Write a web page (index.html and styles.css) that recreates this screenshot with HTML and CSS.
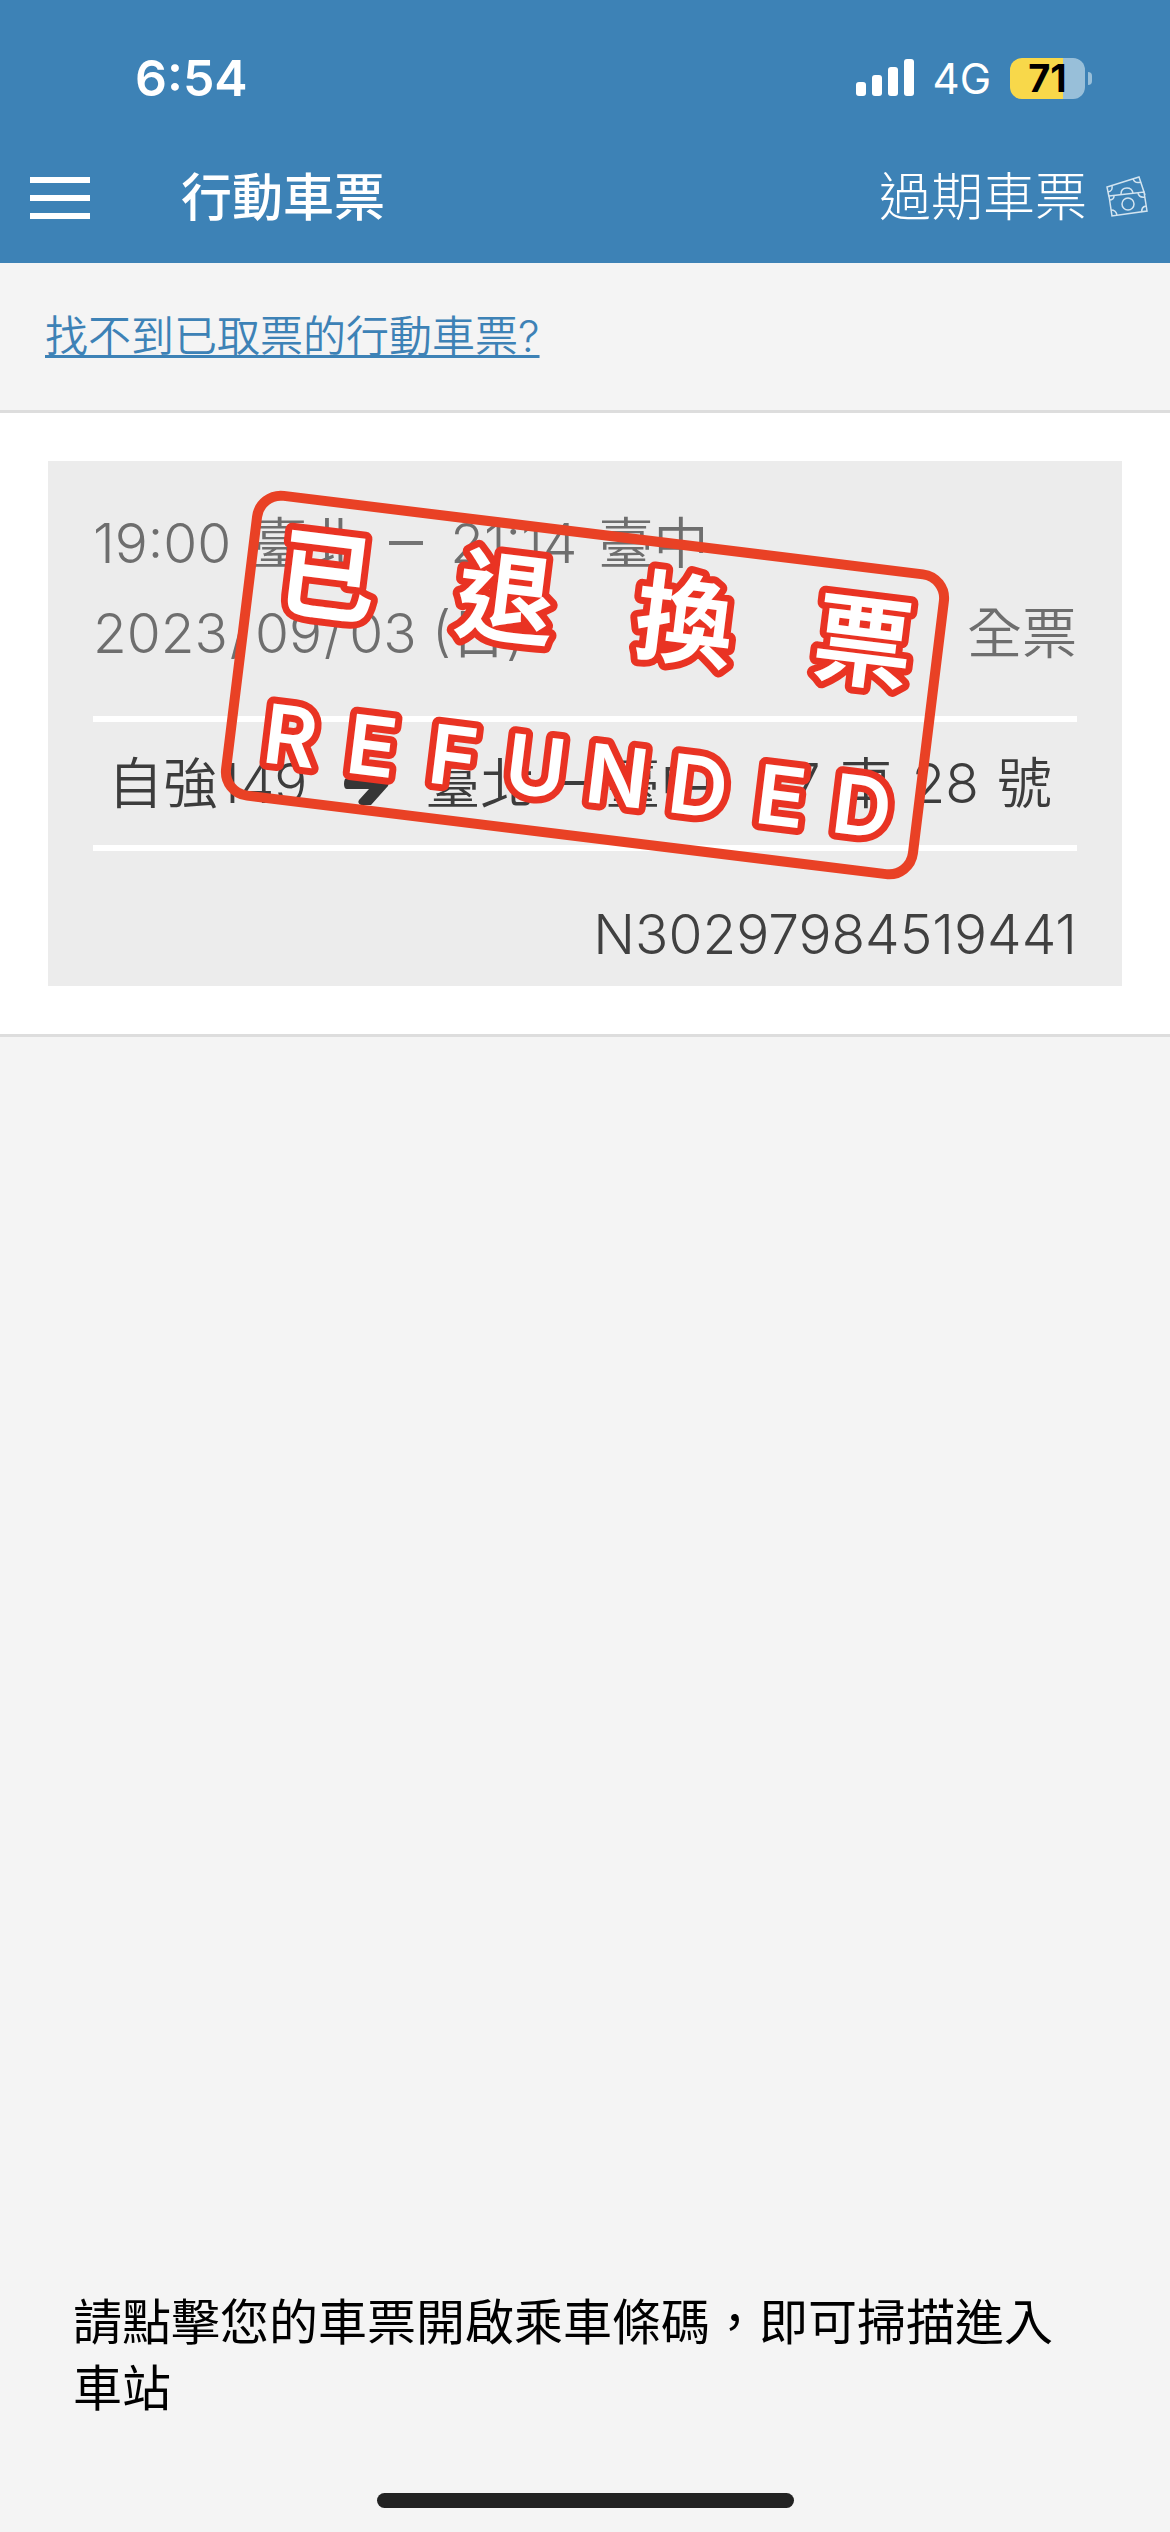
FILE: index.html
```html
<!DOCTYPE html>
<html lang="zh-Hant">
<head>
<meta charset="utf-8">
<meta name="viewport" content="width=device-width, initial-scale=1">
<title>行動車票</title>
<link rel="stylesheet" href="styles.css">
</head>
<body>
<header class="header">
  <div class="status">
    <span class="clock">6:54</span>
    <div class="indicators">
      <svg class="signal" viewBox="0 0 58 38" aria-hidden="true">
        <rect x="0" y="23" width="10" height="14" rx="3"/>
        <rect x="16" y="16" width="10" height="21" rx="3"/>
        <rect x="32" y="8" width="10" height="29" rx="3"/>
        <rect x="48" y="0" width="10" height="37" rx="3"/>
      </svg>
      <span class="network">4G</span>
      <div class="battery"><span class="battery-level">71</span></div>
    </div>
  </div>
  <nav class="navbar">
    <button class="menu" type="button" aria-label="選單"><span></span><span></span><span></span></button>
    <h1 class="title">行動車票</h1>
    <a class="expired" href="#">過期車票
      <svg class="tickets" viewBox="0 0 44 44" aria-hidden="true">
        <path d="M4 21 2 11 34 1 40 19M4 20 39 16 42 35 7 40Z"/>
        <path d="M3 16Q8 15 7 10M28 3Q30 8 36 6M4 24Q9 24 9 20M33 17Q34 22 40 21M6 34Q11 34 12 39M37 36Q36 31 41 30M16 18Q16 12 22 12Q27 12 28 17"/>
        <circle cx="23" cy="28" r="6"/>
      </svg>
    </a>
  </nav>
</header>
<main class="main">
  <p class="help"><a href="#">找不到已取票的行動車票?</a></p>
  <section class="tickets-list">
    <article class="ticket">
      <div class="route">
        <span>19:00</span><span>臺北</span><span class="dash"></span><span>21:14</span><span>臺中</span>
      </div>
      <div class="date">
        <span>2023<span class="slash">/</span>09<span class="slash">/</span>03 (日)</span><span>全票</span>
      </div>
      <div class="train">
        <span>自強149</span>
        <svg class="arrow" viewBox="0 0 46 46" aria-hidden="true"><path d="M4 18H26L16 8Q14 5 18 3H28L45 22Q46 24 45 26L28 45H18Q14 43 16 40L26 29H4Q1 29 1 24Q1 18 4 18Z"/></svg>
        <span class="train-route"><span>臺北</span><span class="dash short"></span><span>臺中</span></span>
        <span class="seat"><span>7</span><span>車</span><span>28</span><span>號</span></span>
      </div>
      <div class="number">N30297984519441</div>
      <svg class="stamp" viewBox="0 0 702 312" role="img" aria-label="已退換票 REFUNDED">
        <rect class="stamp-frame" x="5" y="5" width="692" height="302" rx="24"/>
        <g class="stamp-zh">
          <text x="82" y="116">已</text><text x="262" y="116">退</text><text x="442" y="116">換</text><text x="622" y="116">票</text>
        </g>
        <g class="stamp-en">
          <text x="65" y="272">R</text><text x="147" y="272">E</text><text x="229" y="272">F</text><text x="312" y="272">U</text><text x="394" y="272">N</text><text x="476" y="272">D</text><text x="559" y="272">E</text><text x="641" y="272">D</text>
        </g>
      </svg>
    </article>
  </section>
</main>
<footer class="footer">
  <p class="hint">請點擊您的車票開啟乘車條碼，即可掃描進入車站</p>
  <div class="home-bar"></div>
</footer>
</body>
</html>
```
FILE: styles.css
```css
* { box-sizing: border-box; }

body {
  margin: 0;
  min-height: 100vh;
  display: flex;
  flex-direction: column;
  background: #f4f4f4;
  color: #000;
  font-family: Inter, "Noto Sans CJK TC", sans-serif;
  font-weight: 350;
}

.header { background: #3d82b6; color: #fff; }

.status {
  display: flex;
  justify-content: space-between;
  align-items: center;
  height: 156px;
  padding: 0 85px 0 135px;
}
.clock { font-size: 50px; font-weight: 600; }
.indicators { display: flex; align-items: center; gap: 19px; }
.signal { width: 58px; height: 38px; fill: #fff; }
.network { font-size: 42px; font-weight: 400; }
.battery {
  position: relative;
  width: 75px;
  height: 41px;
  border-radius: 12px;
  background: linear-gradient(90deg, #f8d84a 53px, #98bfd9 53px);
  color: #000;
  text-align: center;
}
.battery::after {
  content: "";
  position: absolute;
  left: 78px;
  top: 14px;
  width: 4px;
  height: 13px;
  border-radius: 0 4px 4px 0;
  background: #98bfd9;
}
.battery-level { display: block; font-size: 38px; line-height: 41px; font-weight: 700; }

.navbar { display: flex; align-items: center; height: 107px; padding: 0 21px 24px 30px; }
.menu {
  display: flex;
  flex-direction: column;
  gap: 12px;
  width: 60px;
  padding: 0;
  border: 0;
  background: none;
}
.menu span { height: 6px; background: #fff; }
.title { margin: 0 0 0 91px; font-size: 51px; line-height: 60px; font-weight: 500; }
.expired {
  display: flex;
  align-items: center;
  gap: 18px;
  margin-left: auto;
  color: #fff;
  font-size: 52px;
  font-weight: 300;
  line-height: 60px;
  text-decoration: none;
}
.tickets { width: 44px; height: 44px; fill: none; stroke: #d3e4f0; stroke-width: 1.5; }

.main { flex: 1; }
.help { margin: 0; padding: 45px; font-size: 43px; line-height: 57px; }
.help a { color: #3d82b6; text-decoration-thickness: 3px; text-underline-offset: 3px; text-decoration-skip-ink: none; }

.tickets-list { padding: 48px; background: #fff; border: solid #ddd; border-width: 3px 0; }
.ticket {
  position: relative;
  padding: 37px 45px 7px;
  background: #ececec;
  color: #6e6e6e;
  font-size: 55px;
  line-height: 90px;
}
.route { display: flex; align-items: center; gap: 21px; }
.dash { width: 34px; height: 4px; margin: 0 6px; background: #737373; }
.date { display: flex; justify-content: space-between; }
.slash { margin: 0 6px 0 2px; }
.train {
  display: flex;
  align-items: center;
  gap: 36px;
  margin-top: 38px;
  padding: 16px 25px 17px 15px;
  border: solid #fff;
  border-width: 6px 0;
  color: #3c3c3c;
}
.train-route { display: flex; align-items: center; gap: 20px; }
.seat { display: flex; gap: 18px; margin-left: auto; }
.short { width: 30px; margin: 0; background: #3c3c3c; }
.arrow { width: 46px; height: 46px; fill: #363636; }
.number { margin-top: 38px; text-align: right; color: #404040; }

.stamp {
  position: absolute;
  left: 50%;
  top: 224px;
  width: 702px;
  height: 312px;
  overflow: visible;
  transform: translate(-50%, -50%) rotate(7deg);
}
.stamp-frame { fill: none; stroke: #e94125; stroke-width: 10; }
.stamp text {
  fill: #fff;
  stroke: #e93323;
  stroke-width: 14;
  stroke-linejoin: round;
  paint-order: stroke;
  text-anchor: middle;
}
.stamp-zh { font-size: 99px; font-weight: 700; }
.stamp-en { font-size: 82px; font-weight: 600; }

.footer { padding: 0 73px 24px; }
.hint { margin: 0 0 71px; font-size: 49px; line-height: 66px; font-weight: 400; }
.home-bar { width: 417px; height: 15px; margin: 0 auto; border-radius: 8px; background: #222; }
```
